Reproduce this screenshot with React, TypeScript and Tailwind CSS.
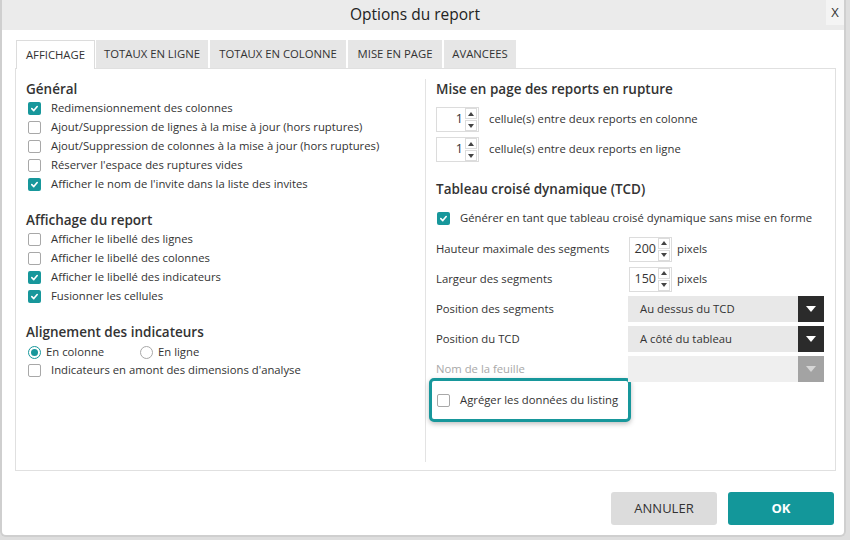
import React from "react";

const font = { fontFamily: '"Open Sans", "Noto Sans", sans-serif' };

function Check({ checked }: { checked?: boolean }) {
  return checked ? (
    <span className="flex h-[13px] w-[13px] shrink-0 items-center justify-center rounded-[2px] bg-[#17979b]">
      <svg width="9" height="9" viewBox="0 0 10 10">
        <polyline points="2,5.2 4.2,7.3 8,2.8" fill="none" stroke="white" strokeWidth="1.8" strokeLinecap="round" strokeLinejoin="round" />
      </svg>
    </span>
  ) : (
    <span className="h-[13px] w-[13px] shrink-0 rounded-[2px] border border-[#a8a8a8] bg-white" />
  );
}

function Radio({ checked }: { checked?: boolean }) {
  return checked ? (
    <span className="flex h-[13px] w-[13px] shrink-0 items-center justify-center rounded-full border border-[#17979b] bg-white">
      <span className="h-[7px] w-[7px] rounded-full bg-[#17979b]" />
    </span>
  ) : (
    <span className="h-[13px] w-[13px] shrink-0 rounded-full border border-[#a8a8a8] bg-white" />
  );
}

function CheckRow({ label, checked }: { label: string; checked?: boolean }) {
  return (
    <div className="flex h-[19px] items-center gap-[10px] pl-[2px]">
      <Check checked={checked} />
      <span>{label}</span>
    </div>
  );
}

function Arrow({ up }: { up?: boolean }) {
  return (
    <span className="flex h-[11px] w-[12px] items-center justify-center border border-[#dcdcdc] bg-white">
      <svg width="6" height="4" viewBox="0 0 6 4">
        <polygon points={up ? "0,4 3,0 6,4" : "0,0 6,0 3,4"} fill="#444" />
      </svg>
    </span>
  );
}

function Spinner({ value }: { value: string }) {
  return (
    <div className="flex h-[25px] w-[43px] items-center justify-end gap-[2px] border border-[#dcdcdc] bg-white pr-[1px]">
      <span className="text-[12.5px] leading-none">{value}</span>
      <div className="flex flex-col gap-[1px]">
        <Arrow up />
        <Arrow />
      </div>
    </div>
  );
}

function Select({ value, disabled }: { value?: string; disabled?: boolean }) {
  return (
    <div className={`flex h-[26px] w-[196px] items-center ${disabled ? "bg-[#efefef]" : "bg-[#e8e8e8]"}`}>
      <span className="flex-1 pl-[12px]">{value}</span>
      <span className={`flex h-[26px] w-[26px] items-center justify-center ${disabled ? "bg-[#a3a3a3]" : "bg-[#2b2b2b]"}`}>
        <svg width="10" height="6" viewBox="0 0 10 6">
          <polygon points="0,0 10,0 5,6" fill={disabled ? "#d6d6d6" : "white"} />
        </svg>
      </span>
    </div>
  );
}

const tabs = [
  { label: "AFFICHAGE", w: "w-[79px]", active: true },
  { label: "TOTAUX EN LIGNE", w: "w-[112px]" },
  { label: "TOTAUX EN COLONNE", w: "w-[136px]" },
  { label: "MISE EN PAGE", w: "w-[94px]" },
  { label: "AVANCEES", w: "w-[72px]" },
];

export default function App() {
  return (
    <div className="h-[540px] w-[850px] overflow-hidden bg-[#dedede] text-[11.3px] text-[#333]" style={font}>
      <div className="flex h-[537px] w-[846px] flex-col overflow-hidden rounded-b-[6px] border-x-2 border-b-2 border-[#cfcfcf] bg-white">
        {/* Title bar */}
        <div className="relative flex h-[30px] shrink-0 items-center justify-center bg-[#ebebeb] pr-[16px]">
          <span className="text-[15.5px] text-[#222]">Options du report</span>
          <span className="absolute right-0 top-0 flex h-[25px] w-[18px] items-center justify-center bg-[#f4f4f4] text-[13px] text-[#333]">
            X
          </span>
        </div>

        {/* Tabs */}
        <div className="mt-[10px] flex h-[28px] gap-[2px] pl-[14px]">
          {tabs.map((t) => (
            <div
              key={t.label}
              className={`flex h-[28px] ${t.w} items-center justify-center ${
                t.active ? "relative z-10 -mr-[1px] h-[29px] border-x border-t border-[#dcdcdc] bg-white" : "bg-[#e6e6e6]"
              }`}
            >
              {t.label}
            </div>
          ))}
        </div>

        {/* Panel */}
        <div className="ml-[13px] flex h-[403px] w-[821px] border border-[#e0e0e0]">
          {/* Left column */}
          <div className="w-[409px] pl-[10px] pt-[10px]">
            <div className="flex h-[20px] items-center text-[13.5px] font-semibold">Général</div>
            <CheckRow label="Redimensionnement des colonnes" checked />
            <CheckRow label="Ajout/Suppression de lignes à la mise à jour (hors ruptures)" />
            <CheckRow label="Ajout/Suppression de colonnes à la mise à jour (hors ruptures)" />
            <CheckRow label="Réserver l'espace des ruptures vides" />
            <CheckRow label="Afficher le nom de l'invite dans la liste des invites" checked />

            <div className="mt-[16px] flex h-[20px] items-center text-[13.5px] font-semibold">Affichage du report</div>
            <CheckRow label="Afficher le libellé des lignes" />
            <CheckRow label="Afficher le libellé des colonnes" />
            <CheckRow label="Afficher le libellé des indicateurs" checked />
            <CheckRow label="Fusionner les cellules" checked />

            <div className="mt-[16px] flex h-[20px] items-center text-[13.5px] font-semibold">Alignement des indicateurs</div>
            <div className="flex h-[20px] items-center pl-[2px]">
              <div className="flex w-[112px] items-center gap-[5px]">
                <Radio checked />
                <span>En colonne</span>
              </div>
              <div className="flex items-center gap-[5px]">
                <Radio />
                <span>En ligne</span>
              </div>
            </div>
            <div className="flex h-[17px] items-center gap-[10px] pl-[2px]">
              <Check />
              <span>Indicateurs en amont des dimensions d'analyse</span>
            </div>
          </div>

          {/* Divider */}
          <div className="mb-[8px] mt-[10px] w-px bg-[#e3e3e3]" />

          {/* Right column */}
          <div className="flex-1 pl-[10px] pt-[10px]">
            <div className="flex h-[20px] items-center text-[13.5px] font-semibold">Mise en page des reports en rupture</div>
            <div className="mt-[8px] flex flex-col gap-[5px]">
              <div className="flex items-center gap-[10px]">
                <Spinner value="1" />
                <span>cellule(s) entre deux reports en colonne</span>
              </div>
              <div className="flex items-center gap-[10px]">
                <Spinner value="1" />
                <span>cellule(s) entre deux reports en ligne</span>
              </div>
            </div>

            <div className="mt-[17px] flex h-[20px] items-center text-[13.5px] font-semibold">Tableau croisé dynamique (TCD)</div>
            <div className="mt-[10px] flex h-[19px] items-center gap-[10px] pl-[1px]">
              <Check checked />
              <span>Générer en tant que tableau croisé dynamique sans mise en forme</span>
            </div>

            <div className="mt-[6px] grid grid-cols-[192px_196px] [grid-auto-rows:30px] items-center">
              <span>Hauteur maximale des segments</span>
              <div className="flex items-center gap-[5px] pl-[1px]">
                <Spinner value="200" />
                <span>pixels</span>
              </div>
              <span>Largeur des segments</span>
              <div className="flex items-center gap-[5px] pl-[1px]">
                <Spinner value="150" />
                <span>pixels</span>
              </div>
              <span>Position des segments</span>
              <Select value="Au dessus du TCD" />
              <span>Position du TCD</span>
              <Select value="A côté du tableau" />
              <span className="text-[#a8a8a8]">Nom de la feuille</span>
              <Select disabled />
            </div>

            <div className="-ml-[7px] -mt-[6px] flex h-[44px] w-[202px] items-center gap-[10px] rounded-[5px] border-[3px] border-[#17979b] bg-white pl-[5px] shadow-[0_2px_5px_rgba(0,0,0,0.25)]">
              <Check />
              <span>Agréger les données du listing</span>
            </div>
          </div>
        </div>

        {/* Footer buttons */}
        <div className="mt-[21px] flex justify-end gap-[11px] pr-[10px]">
          <button className="h-[33px] w-[106px] rounded-[3px] bg-[#dcdcdc] text-[13px] text-[#333]">ANNULER</button>
          <button className="h-[33px] w-[106px] rounded-[3px] bg-[#13979a] text-[13px] font-bold text-white">OK</button>
        </div>
      </div>
    </div>
  );
}
